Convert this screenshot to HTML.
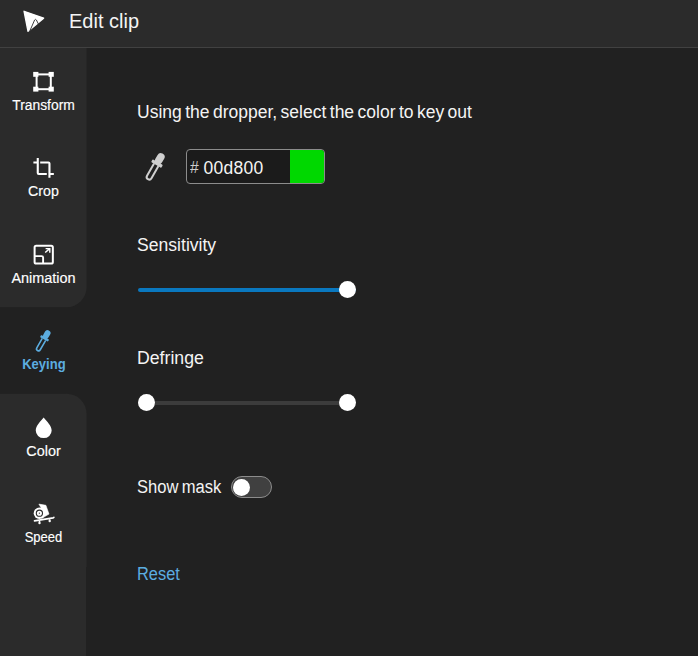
<!DOCTYPE html>
<html><head><meta charset="utf-8">
<style>
*{box-sizing:border-box;margin:0;padding:0}
html,body{width:698px;height:656px;overflow:hidden;background:#212121;font-family:"Liberation Sans",sans-serif;color:#f4f4f4}
#hdr{position:absolute;left:0;top:0;width:698px;height:48px;background:#2b2b2b;border-bottom:1px solid #414141}
#logo{position:absolute;left:22px;top:9px}
.t{position:absolute;white-space:nowrap;line-height:20px}
#title{left:69px;top:9px;font-size:20px;line-height:24px}
#sidefill{position:absolute;left:0;top:48px;width:86px;height:608px;background:#2b2b2b}
.tabbg{position:absolute;left:0;width:87px;background:#2b2b2b}
.tl{position:absolute;left:0;width:87px;text-align:center;font-size:14px;color:#fff;-webkit-text-stroke:0.15px #fff;line-height:16px;white-space:nowrap}
.ic{position:absolute}
.b17{font-size:17px}
.b18{font-size:18px;transform-origin:0 50%}
.track{position:absolute;left:138px;width:218px;height:4px;border-radius:2px}
.thumb{position:absolute;width:17.5px;height:17.5px;border-radius:50%;background:#fff}
</style></head><body>
<div id="hdr">
 <svg id="logo" width="24" height="24" viewBox="0 0 24 24"><path d="M2.1 2.3 L21.6 9.1 L6 22.2 Z" fill="#fff" stroke="#fff" stroke-width="1.4" stroke-linejoin="round"/><path d="M8 21.6 L12.6 11 Q13.5 9.7 14.4 11 L16.3 14.8" fill="none" stroke="#2b2b2b" stroke-width="0.9" stroke-linecap="round"/></svg>
 <div id="title" class="t">Edit clip</div>
</div>

<!-- sidebar -->
<svg style="position:absolute;left:0;top:0" width="120" height="656" viewBox="0 0 120 656"><path fill="#2b2b2b" d="M0 48 H86.6 V287.2 A20 20 0 0 1 66.6 307.2 H0 Z"/><path fill="#2b2b2b" d="M0 393.8 H66.6 A20 20 0 0 1 86.6 413.8 V567 H86 V656 H0 Z"/></svg>
<!-- Transform -->
<svg class="ic" style="left:33px;top:71px" width="22" height="22" viewBox="0 0 22 22"><rect x="3.6" y="3.4" width="14.2" height="14.8" fill="none" stroke="#fff" stroke-width="2"/><rect x="0.2" y="0.9" width="5.2" height="4.9" fill="#fff"/><rect x="15.6" y="0.9" width="5.2" height="4.9" fill="#fff"/><rect x="0.2" y="15.7" width="5.2" height="4.9" fill="#fff"/><rect x="15.6" y="15.7" width="5.2" height="4.9" fill="#fff"/></svg>
<div class="tl" style="top:97px;transform:scaleX(0.989)">Transform</div>
<!-- Crop -->
<svg class="ic" style="left:33px;top:157px" width="22" height="22" viewBox="0 0 22 22"><path d="M4.76 1.1 V15.95 Q4.76 16.95 5.76 16.95 H13.8 M0.4 5.5 H3.8 M7.2 5.5 H15.46 Q16.46 5.5 16.46 6.5 V20.85 M17.4 16.95 H20.85" fill="none" stroke="#fff" stroke-width="2.1"/></svg>
<div class="tl" style="top:183.4px;transform:scaleX(1.015)">Crop</div>
<!-- Animation -->
<svg class="ic" style="left:33px;top:244px" width="22" height="22" viewBox="0 0 22 22"><rect x="1.6" y="1.85" width="18.25" height="17.75" rx="1.6" fill="none" stroke="#fff" stroke-width="2"/><path d="M1.6 12.1 H8.6 A1.5 1.5 0 0 1 10.1 13.6 V19.6" fill="none" stroke="#fff" stroke-width="1.9"/><path d="M12.2 8.5 L16.4 4.9 M12.6 4.6 H16.8 V8.8" fill="none" stroke="#fff" stroke-width="1.4"/></svg>
<div class="tl" style="top:269.8px;transform:scaleX(1.031)">Animation</div>
<!-- Keying -->
<svg class="ic" style="left:30.4px;top:326.4px" width="26" height="30" viewBox="-16.67 -19.23 33.33 38.46"><g transform="rotate(30)" fill="#5cade0"><rect x="-3.8" y="-15.4" width="7.6" height="11.4" rx="3.6"/><rect x="-5.9" y="-5.6" width="11.8" height="3.3" rx="1"/><path d="M-2.55 -2.5 V11.5 A2.55 2.55 0 0 0 2.55 11.5 V-2.5" fill="none" stroke="#5cade0" stroke-width="2"/></g></svg>
<div class="tl" style="top:356.2px;font-weight:700;color:#5cade0;-webkit-text-stroke:0;transform:translateX(0.4px) scaleX(0.93)">Keying</div>
<!-- Color -->
<svg class="ic" style="left:33px;top:416px" width="22" height="24" viewBox="0 0 22 24"><path d="M10.65 1.5 C13.8 5.2 18.65 9.8 18.65 14.6 A7.95 7.5 0 0 1 2.75 14.6 C2.75 9.8 7.5 5.2 10.65 1.5 Z" fill="#fff"/></svg>
<div class="tl" style="top:442.6px;transform:scaleX(1.028)">Color</div>
<!-- Speed -->
<svg class="ic" style="left:32px;top:502px" width="24" height="24" viewBox="0 0 24 24"><circle cx="7.4" cy="11.2" r="5.7" fill="#fff"/><path d="M6.9 2.1 L13.9 3.3 L17 12.1 L9.8 16.3 L7.5 11.4 L8.9 5.5 Z" fill="#fff" stroke="#fff" stroke-width="0.6" stroke-linejoin="round"/><circle cx="7.4" cy="11.2" r="3.1" fill="none" stroke="#2b2b2b" stroke-width="1.1"/><circle cx="7.4" cy="11.2" r="0.65" fill="#3a3a3a"/><path d="M2.5 18.9 L21.2 15.9 L21.9 15.3" stroke="#fff" stroke-width="1.6" fill="none" stroke-linecap="round" stroke-linejoin="round"/><path d="M7.5 19 V20.8 M17.6 17.2 V18.8" stroke="#fff" stroke-width="1.6" fill="none"/><circle cx="7.5" cy="21.1" r="1.2" fill="#fff"/><circle cx="17.7" cy="19.1" r="1.2" fill="#fff"/></svg>
<div class="tl" style="top:529px;transform:scaleX(0.929)">Speed</div>

<!-- main -->
<div class="t b18" style="left:137px;top:102px;word-spacing:-1.5px;transform:scaleX(0.973)">Using the dropper, select the color to key out</div>
<svg class="ic" style="left:140.9px;top:150.5px" width="28" height="32" viewBox="-14 -16 28 32"><g transform="rotate(30)" fill="#cfcfcf"><rect x="-3.8" y="-15.4" width="7.6" height="11.4" rx="3.6"/><rect x="-5.9" y="-5.6" width="11.8" height="3.3" rx="1"/><path d="M-2.55 -2.5 V11.5 A2.55 2.55 0 0 0 2.55 11.5 V-2.5" fill="none" stroke="#cfcfcf" stroke-width="2"/></g></svg>
<div style="position:absolute;left:186px;top:149px;width:138.5px;height:35px;border:1px solid #8c8c8c;border-radius:4px;background:#1b1b1b;overflow:hidden">
 <div style="position:absolute;right:0;top:0;width:34px;height:33px;background:#00d800"></div>
</div>
<div class="t b17" style="left:190px;top:158px;color:#cdcdcd;transform-origin:0 50%;transform:scaleX(0.92)">#</div>
<div class="t" style="left:203.6px;top:157.6px;font-size:17.5px;letter-spacing:0.25px">00d800</div>

<div class="t b18" style="left:136.6px;top:235.4px;transform:scaleX(0.977)">Sensitivity</div>
<div class="track" style="top:288px;background:#0a78bf"></div>
<div class="thumb" style="left:338.8px;top:280.7px"></div>

<div class="t b18" style="left:136.6px;top:348.2px;transform:scaleX(0.982)">Defringe</div>
<div class="track" style="top:401px;background:#3c3c3c"></div>
<div class="thumb" style="left:137.5px;top:393.7px"></div>
<div class="thumb" style="left:338.8px;top:393.7px"></div>

<div class="t b18" style="left:136.8px;top:476.9px;word-spacing:-1.5px;transform:scaleX(0.920)">Show mask</div>
<div style="position:absolute;left:231px;top:476px;width:41px;height:22px;border:1px solid #8c8c8c;border-radius:11px;background:#404040"></div>
<div class="thumb" style="left:232.8px;top:478.5px"></div>

<div class="t b18" style="left:137.2px;top:563.7px;color:#5cade0;transform:scaleX(0.91)">Reset</div>
</body></html>
